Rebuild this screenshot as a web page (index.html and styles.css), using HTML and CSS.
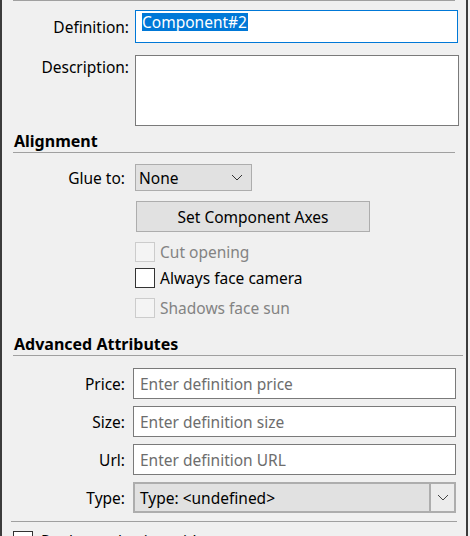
FILE: index.html
```html
<!DOCTYPE html>
<html>
<head>
<meta charset="utf-8">
<link rel="stylesheet" href="styles.css">
</head>
<body>
<div class="frame">
  <div class="sep-top"></div>

  <div class="row row-def">
    <div class="label wide">Definition:</div>
    <div class="input focused"><span class="sel">Component#2</span></div>
  </div>

  <div class="row row-desc">
    <div class="label wide">Description:</div>
    <div class="textarea"></div>
  </div>

  <div class="heading h-align">Alignment</div>

  <div class="row row-glue">
    <div class="label">Glue to:</div>
    <div class="select">
      <span>None</span>
      <svg class="chev" width="12" height="7" viewBox="0 0 12 7"><polyline points="1,1 6,6 11,1" fill="none" stroke="#333" stroke-width="1"/></svg>
    </div>
  </div>

  <div class="row row-btn">
    <div class="button">Set Component Axes</div>
  </div>

  <div class="check c1 disabled"><span class="box"></span><span>Cut opening</span></div>
  <div class="check c2"><span class="box"></span><span>Always face camera</span></div>
  <div class="check c3 disabled"><span class="box"></span><span>Shadows face sun</span></div>

  <div class="heading h-adv">Advanced Attributes</div>

  <div class="row row-attr first">
    <div class="label">Price:</div>
    <div class="input ph">Enter definition price</div>
  </div>
  <div class="row row-attr">
    <div class="label">Size:</div>
    <div class="input ph">Enter definition size</div>
  </div>
  <div class="row row-attr">
    <div class="label">Url:</div>
    <div class="input ph">Enter definition URL</div>
  </div>
  <div class="row row-attr">
    <div class="label">Type:</div>
    <div class="combo">
      <span class="combo-text">Type: &lt;undefined&gt;</span>
      <span class="combo-btn"><svg width="12" height="7" viewBox="0 0 12 7"><polyline points="1,1 6,6 11,1" fill="none" stroke="#444" stroke-width="1"/></svg></span>
    </div>
  </div>

  <div class="sep-bottom"></div>

  <div class="check c4"><span class="box"></span><span>Replace selection with component</span></div>
</div>
</body>
</html>
```

FILE: styles.css
```css
* { box-sizing: border-box; }
html, body {
  margin: 0;
  padding: 0;
  background: #f0f0f0;
  overflow: hidden;
}
body {
  width: 470px;
  height: 536px;
  font-family: "Noto Sans", "Open Sans", sans-serif;
  font-size: 15.5px;
  color: #000;
}
.frame {
  width: 468px;
  height: 536px;
  border-left: 2px solid #3c3c3c;
  border-right: 2px solid #3c3c3c;
  overflow: hidden;
}
.sep-top {
  margin-left: 11px;
  width: 442px;
  height: 1px;
  background: #a0a0a0;
}
.row {
  display: flex;
  align-items: center;
}
.label {
  width: 123px;
  text-align: right;
  margin-right: 8px;
  white-space: nowrap;
}
.label.wide {
  width: 127px;
  margin-right: 6px;
}
.row-def { margin-top: 9px; height: 33px; }
.input {
  width: 323px;
  height: 31px;
  background: #fff;
  border: 1px solid #7a7a7a;
  display: flex;
  align-items: center;
  padding-left: 6px;
  white-space: nowrap;
}
.input.focused {
  height: 33px;
  border-color: #0078d7;
  padding-left: 6px;
  align-items: flex-start;
  padding-top: 2px;
}
.sel {
  background: #0078d7;
  color: #fff;
  line-height: 18px;
  padding: 0 1px 0 0;
}
.row-desc { margin-top: 12px; align-items: flex-start; }
.row-desc .label { padding-top: 1px; }
.textarea {
  width: 324px;
  height: 71px;
  background: #fff;
  border: 1px solid #7a7a7a;
}
.heading {
  margin-left: 11px;
  width: 442px;
  font-weight: bold;
  font-size: 16px;
  line-height: 20px;
  border-bottom: 1px solid #a0a0a0;
  padding-left: 1px;
  padding-bottom: 1px;
}
.h-align { margin-top: 5px; }
.h-adv { margin-top: 16px; width: 450px; }
.row-glue { margin-top: 11px; }
.row-glue .label { margin-right: 10px; }
.select {
  width: 117px;
  height: 27px;
  background: #e1e1e1;
  border: 1px solid #adadad;
  display: flex;
  align-items: center;
  justify-content: space-between;
  padding: 0 8px 0 3px;
}
.chev { display: block; }
.row-btn { margin-top: 10px; padding-left: 134px; }
.button {
  width: 234px;
  height: 31px;
  background: #e1e1e1;
  border: 1px solid #adadad;
  display: flex;
  align-items: center;
  justify-content: center;
}
.check {
  display: flex;
  align-items: center;
  padding-left: 133px;
  height: 20px;
}
.check .box {
  width: 20px;
  height: 20px;
  border: 1px solid #333;
  background: #fff;
  margin-right: 5px;
  flex: none;
}
.check.disabled { color: #838383; }
.check.disabled .box { border-color: #cccccc; background: #f4f4f4; }
.c1 { margin-top: 10px; }
.c2 { margin-top: 6px; }
.c3 { margin-top: 10px; }
.row-attr { margin-top: 7px; height: 31px; }
.row-attr.first { margin-top: 12px; }
.row-attr .label { margin-right: 8px; }
.row-attr .input { width: 323px; color: #6d6d6d; }
.combo {
  width: 323px;
  height: 31px;
  background: #e1e1e1;
  border: 2px solid #adadad;
  display: flex;
  align-items: center;
}
.combo-text { flex: 1; padding-left: 5px; white-space: nowrap; }
.combo-btn {
  width: 25px;
  height: 100%;
  border-left: 2px solid #adadad;
  background: #ececec;
  display: flex;
  align-items: center;
  justify-content: center;
}
.sep-bottom {
  margin-top: 8px;
  margin-left: 9px;
  width: 446px;
  height: 1px;
  background: #a0a0a0;
}
.c4 { margin-top: 9px; padding-left: 11px; }
.c4 .box { margin-right: 8px; }
```
